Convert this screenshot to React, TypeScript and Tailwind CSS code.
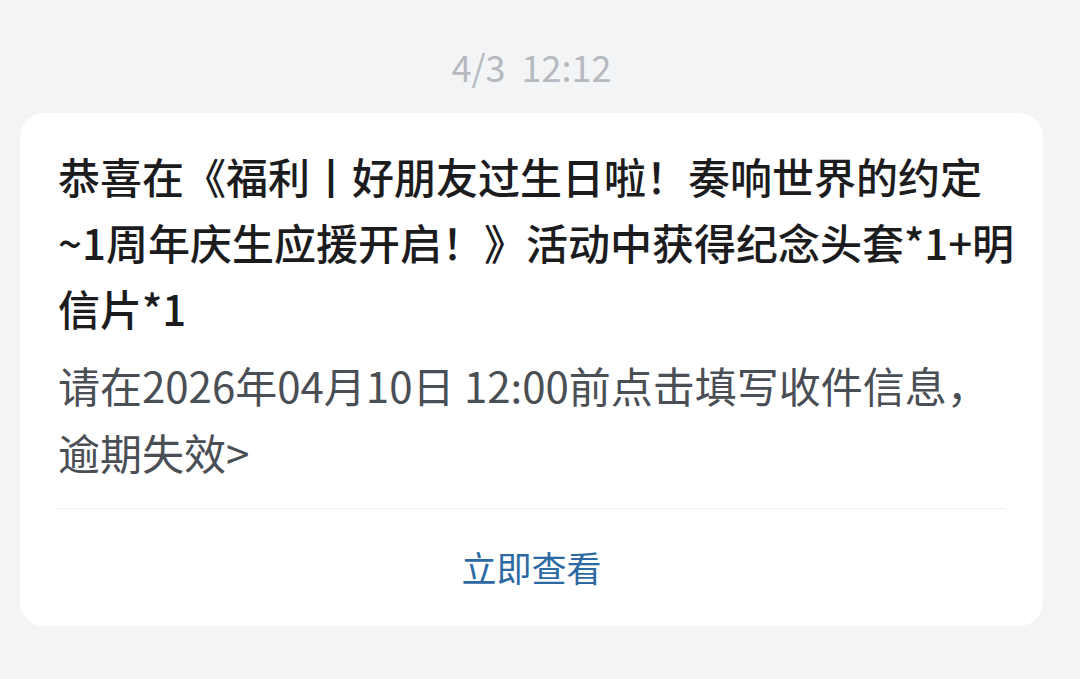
import React from 'react';

const font = { fontFamily: '"Noto Sans CJK SC", "Noto Sans", sans-serif' };

export default function App() {
  return (
    <div className="w-[1080px] h-[679px] bg-[#f3f4f6] overflow-hidden" style={font}>
      {/* Time stamp */}
      <div className="w-[1023px] ml-[20px] pt-[40px] h-[113px] text-center text-[36px] leading-[52px] text-[#b6b9bf] whitespace-pre">
        4/3  12:12
      </div>

      {/* Message card */}
      <div className="w-[1023px] ml-[20px] bg-white rounded-[24px]">
        <div className="pl-[38px] pr-[23px] pt-[30px] pb-[23px]">
          <p className="text-[42px] leading-[66px] font-medium text-[#1c1c1e]">
            恭喜在《福利丨好朋友过生日啦！奏响世界的约定~1周年庆生应援开启！》活动中获得纪念头套*1+明信片*1
          </p>
          <p className="mt-[10px] text-[42px] leading-[67px] text-[#4a4e55]">
            请在2026年04月10日 12:00前点击填写收件信息，逾期失效&gt;
          </p>
        </div>
        <div className="mx-[37px] h-px bg-[#eeeeef]" />
        <button className="w-full h-[117px] text-[35px] text-[#2d6aa3]">立即查看</button>
      </div>
    </div>
  );
}
